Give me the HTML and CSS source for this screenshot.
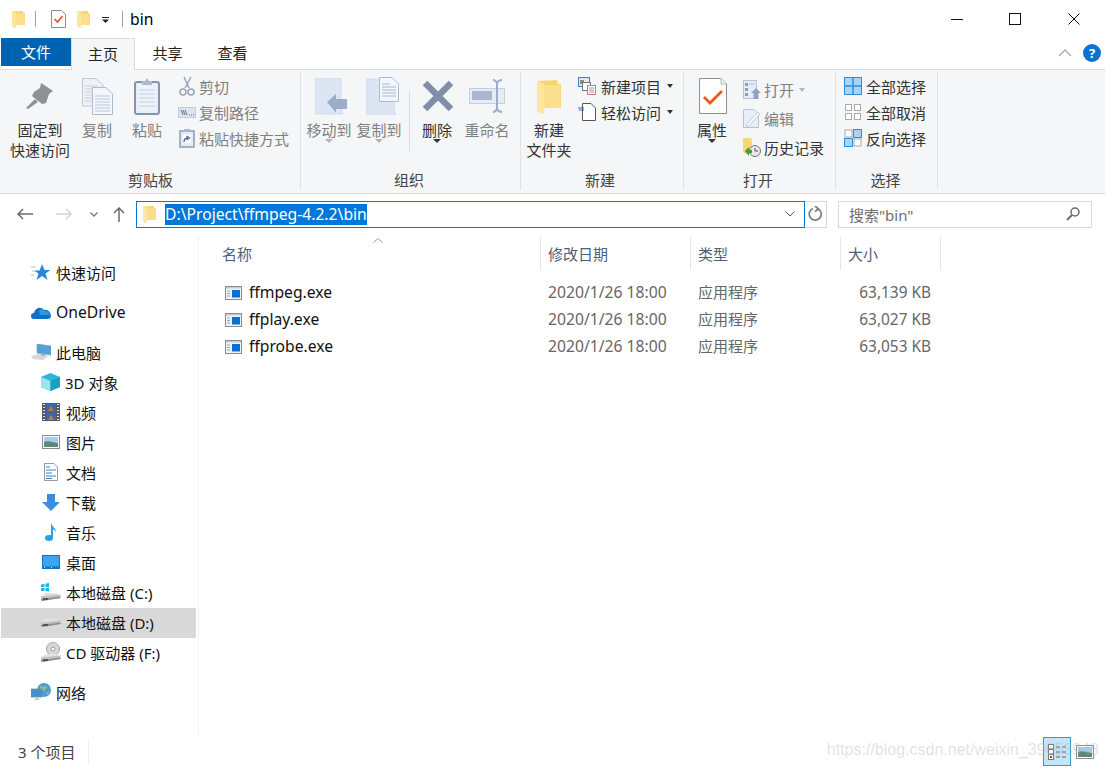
FILE: index.html
```html
<!DOCTYPE html>
<html lang="zh-CN">
<head>
  <meta charset="UTF-8">
  <title>bin</title>
  <link rel="stylesheet" href="styles.css">
</head>
<body>
  <svg class="sprite">
    <symbol id="folder" viewBox="0 0 13 18">
      <path d="M0 1.500L11 1V3H13V15H3V18L0 16Z" fill="#f7d56c"/>
      <path d="M3 3.500H12.800V15H3Z" fill="#fbdf8a"/>
      <path d="M0 1L4 3V18L0 16Z" fill="#fce6a0"/>
    </symbol>
    <symbol id="exe" viewBox="0 0 17 14">
      <rect x=".5" y=".5" width="16" height="13" fill="#eef3f9" stroke="#8a8a8a"/>
      <rect x="1" y="1" width="15" height="1.500" fill="#c3cedb"/>
      <path d="M2 5H5M2 7.500H5M2 10H5" stroke="#99a3ad"/>
      <rect x="7" y="4" width="8" height="7.500" fill="#0c6fd0"/>
    </symbol>
    <symbol id="drive" viewBox="0 0 20 10">
      <path d="M0 5.500L5 2H15L19.500 5L1 7.500Z" fill="#e2e2e2"/>
      <path d="M0 5.500L19.500 3.500V7L1 10L0 9Z" fill="#c2c2c2"/>
      <path d="M0 8L19.500 5.500V7L1 10L0 9Z" fill="#8f8f8f"/>
      <rect x="2" y="7.300" width="5" height="1.400" fill="#3a3a3a"/>
    </symbol>
  </svg>

  <div class="window">
    <div class="titlebar">
      <svg class="qa-folder" width="13" height="18"><use href="#folder"/></svg>
      <span class="qa-sep"></span>
      <svg class="qa-check" width="15" height="18" viewBox="0 0 15 18">
        <path d="M.5.5H10.500L14.500 4.500V17.500H.5Z" fill="#fff" stroke="#8c8c8c"/>
        <path d="M3.500 9L6.500 12L11.500 6" fill="none" stroke="#ec4e20" stroke-width="1.600"/>
      </svg>
      <svg class="qa-folder2" width="13" height="18"><use href="#folder"/></svg>
      <svg class="qa-drop" width="7" height="6" viewBox="0 0 7 6">
        <rect y="0" width="7" height="1" fill="#222"/>
        <path d="M0 2.500H7L3.500 6Z" fill="#222"/>
      </svg>
      <span class="qa-sep qa-sep-2"></span>
      <span class="title-text">bin</span>
      <div class="win-controls">
        <svg width="12" height="12" viewBox="0 0 12 12"><path d="M0 6.500H12" stroke="#111"/></svg>
        <svg width="12" height="12" viewBox="0 0 12 12"><rect x=".5" y=".5" width="11" height="11" fill="none" stroke="#111"/></svg>
        <svg class="win-close" width="12" height="12" viewBox="0 0 12 12"><path d="M.5.5L11.500 11.500M11.500.5L.5 11.500" stroke="#111"/></svg>
      </div>
    </div>

    <div class="tabs">
      <div class="tab tab-file">文件</div>
      <div class="tab tab-active">主页</div>
      <div class="tab">共享</div>
      <div class="tab">查看</div>
      <div class="tabs-right">
        <svg width="14" height="8" viewBox="0 0 14 8"><path d="M1 7L7 1L13 7" fill="none" stroke="#a8a8a8" stroke-width="1.300"/></svg>
        <span class="help">?</span>
      </div>
    </div>

    <div class="ribbon">
      <div class="group group-clip">
        <div class="group-body">
          <div class="big-btn btn-pin">
            <div class="big-icon">
              <svg width="28" height="28" viewBox="0 0 28 28"><path d="M15 1L27 9L23 12L20 21L16 22L6 14L8 10L14 6ZM9 17L12 20L2 27L0 26Z" fill="#8b9197"/></svg>
            </div>
            <div class="big-label">固定到<br>快速访问</div>
          </div>
          <div class="big-btn off">
            <div class="big-icon">
              <svg width="31" height="37" viewBox="0 0 31 37">
                <path d="M.5.5H14L21 7V28H.5Z" fill="#eef2f8" stroke="#bcc8da"/>
                <path d="M3 8H16M3 11H18M3 14H18M3 17H18M3 20H18M3 23H18" stroke="#c5d0e0"/>
                <path d="M10.500 9.500H24L30.500 16V36.500H10.500Z" fill="#f3f6fb" stroke="#aebcd2"/>
                <path d="M13 18H28M13 21H28M13 24H28M13 27H28M13 30H28M13 33H28" stroke="#b9c6da"/>
              </svg>
            </div>
            <div class="big-label">复制</div>
          </div>
          <div class="big-btn off">
            <div class="big-icon">
              <svg width="26" height="38" viewBox="0 0 26 38">
                <rect x="1" y="5" width="24" height="32" rx="2" fill="#e9eef6" stroke="#8494b0" stroke-width="2"/>
                <rect x="4" y="8" width="18" height="26" fill="#eef2f9"/>
                <path d="M5 13H21M5 17H21M5 21H21M5 25H21M5 29H21" stroke="#c5d0e2"/>
                <path d="M8 8V4H11L13 1L15 4H18V8Z" fill="#aeb9cc"/>
              </svg>
            </div>
            <div class="big-label">粘贴</div>
          </div>
          <div class="small-col">
            <div class="small-btn off">
              <svg width="18" height="20" viewBox="0 0 18 20" fill="none" stroke="#98a4ba" stroke-width="1.500">
                <path d="M6 1L11 12M13 1L7 12"/><circle cx="5" cy="16" r="3"/><circle cx="13" cy="16" r="3"/>
              </svg>
              <span>剪切</span>
            </div>
            <div class="small-btn off">
              <svg width="18" height="11" viewBox="0 0 18 11">
                <rect x=".5" y=".5" width="17" height="10" fill="#dde4ef" stroke="#c0cbdc"/>
                <path d="M3 3L5 8M5 3L7 8M7 3L9 8M11 8H12M13 8H14M15 8H16" stroke="#66738a"/>
              </svg>
              <span>复制路径</span>
            </div>
            <div class="small-btn off">
              <svg width="18" height="20" viewBox="0 0 18 20">
                <rect x="2" y="3" width="14" height="16" fill="#e5ebf4" stroke="#8e9db6" stroke-width="1.500"/>
                <rect x="6" y="1" width="6" height="3" fill="#aab6c9"/>
                <rect x="5" y="7" width="8" height="8" fill="#fff"/>
                <path d="M6 14C6 11 7 10 10 10M8.500 8L11.500 10L8.500 12" fill="none" stroke="#55698a" stroke-width="1.300"/>
              </svg>
              <span>粘贴快捷方式</span>
            </div>
          </div>
        </div>
        <div class="group-label">剪贴板</div>
      </div>

      <div class="group group-org">
        <div class="group-body">
          <div class="big-btn off">
            <div class="big-icon">
              <svg class="icon-move" width="32" height="37" viewBox="0 0 32 37">
                <path d="M0 0H26V31L28 36H0Z" fill="#dbe5f3" stroke="#d0dcee"/>
                <path d="M12 24L21 16V21H32V31H21V35Z" fill="#9badc9"/>
              </svg>
            </div>
            <div class="big-label">移动到</div>
            <span class="drop-arrow"></span>
          </div>
          <div class="big-btn off">
            <div class="big-icon">
              <svg class="icon-copyto" width="33" height="38" viewBox="0 0 33 38">
                <path d="M0 2H28V32L30 38H0Z" fill="#dbe5f3" stroke="#d0dcee"/>
                <path d="M13.500.5H26L32.500 7V24.500H13.500Z" fill="#f3f6fb" stroke="#aebcd2"/>
                <path d="M16 7H24M16 10H30M16 13H30M16 16H30M16 19H30" stroke="#a7b6cd"/>
              </svg>
            </div>
            <div class="big-label">复制到</div>
            <span class="drop-arrow"></span>
          </div>
          <span class="org-sep"></span>
          <div class="big-btn">
            <div class="big-icon">
              <svg class="icon-shift" width="32" height="32" viewBox="0 0 32 32"><path d="M3 3L29 29M29 3L3 29" stroke="#7f8fa9" stroke-width="6.500"/></svg>
            </div>
            <div class="big-label">删除</div>
            <span class="drop-arrow dark"></span>
          </div>
          <div class="big-btn off">
            <div class="big-icon">
              <svg width="37" height="34" viewBox="0 0 37 34">
                <rect x=".5" y="9.500" width="35" height="15" fill="#e6ecf6" stroke="#c3d0e3"/>
                <rect x="3" y="12" width="20" height="9" fill="#a9b8d0"/>
                <path d="M24 1C26 1 27 2 28 4C29 2 30 1 33 1M28 4V30M24 33C26 33 27 32 28 30C29 32 30 33 33 33" fill="none" stroke="#9eadc6" stroke-width="2"/>
              </svg>
            </div>
            <div class="big-label">重命名</div>
          </div>
        </div>
        <div class="group-label">组织</div>
      </div>

      <div class="group group-new">
        <div class="group-body">
          <div class="big-btn">
            <div class="big-icon">
              <svg width="24" height="36" viewBox="0 0 13 18" preserveAspectRatio="none"><use href="#folder"/></svg>
            </div>
            <div class="big-label">新建<br>文件夹</div>
          </div>
          <div class="small-col">
            <div class="small-btn">
              <svg width="18" height="18" viewBox="0 0 18 18">
                <rect x=".5" y=".5" width="11" height="9" fill="#dce8f5" stroke="#3a87c8"/>
                <rect x="2" y="3" width="4" height="4" fill="#7a9a6a"/>
                <rect x="4.500" y="5.500" width="8" height="8" fill="#fff" stroke="#777"/>
                <rect x="9.500" y="8.500" width="8" height="9" fill="#fff" stroke="#c77"/>
                <path d="M11 11H16M11 13H16M11 15H16" stroke="#99b"/>
              </svg>
              <span>新建项目</span>
              <span class="side-arrow"></span>
            </div>
            <div class="small-btn">
              <svg width="18" height="18" viewBox="0 0 18 18">
                <path d="M4.500.5H13L17.500 5V17.500H4.500Z" fill="#fff" stroke="#555"/>
                <path d="M0 5H6M1 7H6" stroke="#2a6fb8"/>
              </svg>
              <span>轻松访问</span>
              <span class="side-arrow"></span>
            </div>
          </div>
        </div>
        <div class="group-label">新建</div>
      </div>

      <div class="group group-open">
        <div class="group-body">
          <div class="big-btn">
            <div class="big-icon">
              <svg class="icon-shift" width="28" height="36" viewBox="0 0 28 36">
                <path d="M.5.500H22L27.500 6V35.500H.5Z" fill="#fff" stroke="#8f8f8f"/>
                <path d="M22 .5V6H27.500" fill="#eee" stroke="#bbb"/>
                <path d="M5 19L11 25L23 13" fill="none" stroke="#ea5a1e" stroke-width="2.800"/>
              </svg>
            </div>
            <div class="big-label">属性</div>
            <span class="drop-arrow dark"></span>
          </div>
          <div class="small-col col-open">
            <div class="small-btn off">
              <svg width="18" height="19" viewBox="0 0 18 19">
                <rect x=".5" y=".5" width="13" height="18" fill="#e6ecf5" stroke="#b4c2d6"/>
                <path d="M2 3H5V6H2ZM2 8H5V11H2ZM2 13H5V16H2Z" fill="#8e9db6"/>
                <path d="M6 4H12" stroke="#b4c2d6"/>
                <path d="M8 13L13 8L18 13H15.500V19H10.500V13Z" fill="#8fa2c0"/>
              </svg>
              <span>打开</span>
              <span class="side-arrow light"></span>
            </div>
            <div class="small-btn off">
              <svg width="18" height="19" viewBox="0 0 18 19">
                <path d="M.5.500H11L15.500 5V18.500H.5Z" fill="#e9eef6" stroke="#b4c2d6"/>
                <path d="M3 16L15 3L17 5L6 17L3 17Z" fill="#f7f9fc" stroke="#c0cde0"/>
              </svg>
              <span>编辑</span>
            </div>
            <div class="small-btn">
              <svg width="18" height="19" viewBox="0 0 18 19">
                <path d="M0 0H8L9 3V16H3L0 14Z" fill="#f5d776"/>
                <circle cx="12" cy="13" r="5.500" fill="#e8e8e8" stroke="#777"/>
                <path d="M12 10V13H15" fill="none" stroke="#555"/>
                <path d="M2 13L6 9V12H9V15H6V18Z" fill="#3f9b35"/>
              </svg>
              <span>历史记录</span>
            </div>
          </div>
        </div>
        <div class="group-label">打开</div>
      </div>

      <div class="group group-sel">
        <div class="group-body">
          <div class="small-col">
            <div class="small-btn">
              <svg width="18" height="18" viewBox="0 0 18 18">
                <rect x=".5" y=".5" width="17" height="17" fill="#a9d4f5" stroke="#2b8fdc"/>
                <path d="M9 0V18M0 9H18" stroke="#2b8fdc" stroke-width="1.500"/>
              </svg>
              <span>全部选择</span>
            </div>
            <div class="small-btn">
              <svg width="18" height="18" viewBox="0 0 18 18" fill="#fff" stroke="#a8a8a8">
                <rect x="1.500" y="1.500" width="6" height="6"/><rect x="10.500" y="1.500" width="6" height="6"/>
                <rect x="1.500" y="10.500" width="6" height="6"/><rect x="10.500" y="10.500" width="6" height="6"/>
              </svg>
              <span>全部取消</span>
            </div>
            <div class="small-btn">
              <svg width="18" height="18" viewBox="0 0 18 18">
                <rect x="1" y="1" width="7" height="7" fill="#fff" stroke="#a8a8a8"/>
                <rect x="9.500" y=".5" width="8" height="8" fill="#a9d4f5" stroke="#2b8fdc"/>
                <rect x=".5" y="9.500" width="8" height="8" fill="#a9d4f5" stroke="#2b8fdc"/>
                <rect x="10" y="10" width="7" height="7" fill="#fff" stroke="#a8a8a8"/>
              </svg>
              <span>反向选择</span>
            </div>
          </div>
        </div>
        <div class="group-label">选择</div>
      </div>
    </div>

    <div class="navbar">
      <svg class="nav-back" width="16" height="12" viewBox="0 0 16 12"><path d="M16 6H1M6 1L1 6L6 11" fill="none" stroke="#6b6b6b" stroke-width="1.500"/></svg>
      <svg class="nav-fwd" width="16" height="12" viewBox="0 0 16 12"><path d="M0 6H15M10 1L15 6L10 11" fill="none" stroke="#d4d4d4" stroke-width="1.500"/></svg>
      <svg class="nav-recent" width="8" height="5" viewBox="0 0 8 5"><path d="M.5.5L4 4L7.500.5" fill="none" stroke="#777" stroke-width="1.300"/></svg>
      <svg class="nav-up" width="12" height="15" viewBox="0 0 12 15"><path d="M6 15V1M1 6L6 1L11 6" fill="none" stroke="#6b6b6b" stroke-width="1.500"/></svg>
      <div class="address">
        <svg width="13" height="18"><use href="#folder"/></svg>
        <span class="path-text">D:\Project\ffmpeg-4.2.2\bin</span>
        <svg class="addr-drop" width="10" height="6" viewBox="0 0 10 6"><path d="M.5.5L5 5L9.500.5" fill="none" stroke="#555"/></svg>
      </div>
      <div class="refresh">
        <svg width="15" height="16" viewBox="0 0 15 16"><path d="M5 2.500A6 6 0 1 0 10.500 3M7 0L10.500 3L7 5.500" fill="none" stroke="#808080" stroke-width="1.800"/></svg>
      </div>
      <div class="search">
        <span>搜索"bin"</span>
        <svg width="14" height="14" viewBox="0 0 14 14"><circle cx="9" cy="5" r="4" fill="none" stroke="#6b6b6b" stroke-width="1.500"/><path d="M6 8L1 13" stroke="#6b6b6b" stroke-width="2"/></svg>
      </div>
    </div>

    <div class="main">
      <div class="sidebar">
        <div class="tree-item lvl1 first">
          <svg width="20" height="18" viewBox="0 0 20 18">
            <path d="M11 1L13.500 7H19.500L14.500 10.500L16.500 17L11 13L5.500 17L7.500 10.500L3 7.500H8.500Z" fill="#2b86d8"/>
            <path d="M0 4H5M1 8H4M0 12H3" stroke="#9cc7ea"/>
          </svg>
          <span>快速访问</span>
        </div>
        <div class="tree-item lvl1 gap">
          <svg width="20" height="13" viewBox="0 0 20 13">
            <path d="M3 13A3 3 0 0 1 3 7C4 2 10 0 13 4C17 3 20 7 20 10C20 12 18 13 17 13Z" fill="#0f6fc6"/>
            <path d="M8 5C10 2 13 3 14 5C17 4.500 19 7 19 9L9 9Z" fill="#2a9ae0"/>
          </svg>
          <span class="latin">OneDrive</span>
        </div>
        <div class="tree-item lvl1 gap">
          <svg width="20" height="16" viewBox="0 0 20 16">
            <path d="M6 0L20 2V11L6 9Z" fill="#4fa3d9" stroke="#7c93a8" stroke-width=".6"/>
            <path d="M0 12L7 10L18 12L12 16L2 15Z" fill="#d5d8db"/>
            <path d="M10 10L14 10.500L14 12L10 11.500Z" fill="#9aa5ae"/>
          </svg>
          <span>此电脑</span>
        </div>
        <div class="tree-item lvl2">
          <svg width="19" height="18" viewBox="0 0 19 18">
            <path d="M9.500 0L19 4V14L9.500 18L0 14V4Z" fill="#29b6d2"/>
            <path d="M0 4L9.500 8V18L0 14Z" fill="#9be3ee"/>
            <path d="M9.500 8L19 4V14L9.500 18Z" fill="#17a2c4"/>
          </svg>
          <span>3D 对象</span>
        </div>
        <div class="tree-item lvl2">
          <svg width="18" height="18" viewBox="0 0 18 18">
            <rect width="18" height="18" fill="#55595e"/>
            <path d="M1 1.500H3M1 4.500H3M1 7.500H3M1 10.500H3M1 13.500H3M1 16.500H3M15 1.500H17M15 4.500H17M15 7.500H17M15 10.500H17M15 13.500H17M15 16.500H17" stroke="#e4e4e4"/>
            <rect x="4" y="1" width="10" height="7.500" fill="#3a68b0"/>
            <rect x="4" y="9.500" width="10" height="7.500" fill="#3a68b0"/>
            <path d="M6 8L9 3L12 8ZM6 17L9 12L12 17Z" fill="#c8782c"/>
          </svg>
          <span>视频</span>
        </div>
        <div class="tree-item lvl2">
          <svg width="18" height="14" viewBox="0 0 18 14">
            <rect x=".5" y=".5" width="17" height="13" fill="#fff" stroke="#8c8c8c"/>
            <rect x="2" y="2" width="14" height="6" fill="#a8cdea"/>
            <path d="M2 7C6 5 10 7 16 8V12H2Z" fill="#5d8a76"/>
          </svg>
          <span>图片</span>
        </div>
        <div class="tree-item lvl2">
          <svg width="18" height="18" viewBox="0 0 18 18">
            <path d="M2.500.500H12L15.500 4V17.500H2.500Z" fill="#fff" stroke="#999"/>
            <path d="M4 4H8M4 7H14M4 10H10M4 13H14M4 15.500H10" stroke="#3b82c4"/>
          </svg>
          <span>文档</span>
        </div>
        <div class="tree-item lvl2">
          <svg width="18" height="17" viewBox="0 0 18 17"><path d="M5 0H13V8H18L9 17L0 8H5Z" fill="#3a8ee0"/></svg>
          <span>下载</span>
        </div>
        <div class="tree-item lvl2">
          <svg width="18" height="18" viewBox="0 0 18 18">
            <ellipse cx="7" cy="15" rx="4" ry="3" fill="#22a0e8"/>
            <path d="M9 15V0C10 4 14 5 14 9C13 7 11 6.500 11 6V15Z" fill="#22a0e8"/>
          </svg>
          <span>音乐</span>
        </div>
        <div class="tree-item lvl2">
          <svg width="18" height="14" viewBox="0 0 18 14">
            <rect width="18" height="14" fill="#1273c4"/>
            <rect x="1" y="1" width="16" height="10.500" fill="#3ba5ee"/>
            <path d="M2 12.500H16" stroke="#d6e9f8" stroke-dasharray="1 6"/>
          </svg>
          <span>桌面</span>
        </div>
        <div class="tree-item lvl2">
          <svg width="20" height="18" viewBox="0 0 20 18">
            <path d="M0 1.500L3.500 1V4H0ZM4.500.800L8 0V4H4.500ZM0 5H3.500V8H0ZM4.500 5H8V8.500L4.500 8Z" fill="#19b6ec"/>
            <use href="#drive" y="8" width="20" height="10"/>
          </svg>
          <span>本地磁盘 (C:)</span>
        </div>
        <div class="tree-item lvl2 selected">
          <svg width="20" height="10"><use href="#drive"/></svg>
          <span>本地磁盘 (D:)</span>
        </div>
        <div class="tree-item lvl2">
          <svg width="20" height="20" viewBox="0 0 20 20">
            <circle cx="12" cy="7" r="6.500" fill="#d8d8d8" stroke="#a5a5a5"/>
            <circle cx="12" cy="7" r="2" fill="#fff" stroke="#999"/>
            <use href="#drive" y="10" width="20" height="10"/>
          </svg>
          <span>CD 驱动器 (F:)</span>
        </div>
        <div class="tree-item lvl1 gap">
          <svg width="20" height="18" viewBox="0 0 20 18">
            <circle cx="13" cy="7" r="7" fill="#4f9cd0"/>
            <path d="M9 3C12 5 14 2 16 4C15 7 12 9 9 7ZM15 10L18 8L17 12Z" fill="#8fbf96"/>
            <rect x="0" y="6" width="11" height="8" fill="#3e93cd" stroke="#7b8b99" stroke-width=".8"/>
            <path d="M3 17H9L7 14.500H5Z" fill="#c8ccd0"/>
          </svg>
          <span>网络</span>
        </div>
      </div>

      <div class="content">
        <div class="col-head">
          <div class="head-cell head-name">名称
            <svg class="sort-mark" width="10" height="5" viewBox="0 0 10 5"><path d="M.5 4.500L5 .5L9.500 4.500" fill="none" stroke="#999"/></svg>
          </div>
          <div class="head-cell">修改日期</div>
          <div class="head-cell">类型</div>
          <div class="head-cell">大小</div>
        </div>
        <div class="file-row">
          <div class="file-name"><svg width="17" height="14"><use href="#exe"/></svg>ffmpeg.exe</div>
          <div class="file-meta latin">2020/1/26 18:00</div>
          <div class="file-meta">应用程序</div>
          <div class="file-meta file-size">63,139 KB</div>
        </div>
        <div class="file-row">
          <div class="file-name"><svg width="17" height="14"><use href="#exe"/></svg>ffplay.exe</div>
          <div class="file-meta latin">2020/1/26 18:00</div>
          <div class="file-meta">应用程序</div>
          <div class="file-meta file-size">63,027 KB</div>
        </div>
        <div class="file-row">
          <div class="file-name"><svg width="17" height="14"><use href="#exe"/></svg>ffprobe.exe</div>
          <div class="file-meta latin">2020/1/26 18:00</div>
          <div class="file-meta">应用程序</div>
          <div class="file-meta file-size">63,053 KB</div>
        </div>
      </div>
    </div>

    <div class="statusbar">
      <span class="item-count">3 个项目</span>
      <span class="status-sep"></span>
      <div class="view-btns">
        <div class="view-btn view-active">
          <svg width="19" height="16" viewBox="0 0 19 16">
            <rect x=".5" y=".5" width="5" height="4.500" fill="#fff" stroke="#777"/>
            <rect x=".5" y="5.500" width="5" height="4.500" fill="#fff" stroke="#777"/>
            <rect x=".5" y="10.500" width="5" height="5" fill="#fff" stroke="#777"/>
            <rect x="2" y="12" width="2" height="2" fill="#b5432a"/>
            <path d="M8 3H12M14 3H18M8 8H12M14 8H18M8 13H12M14 13H18" stroke="#666"/>
          </svg>
        </div>
        <svg width="18" height="14" viewBox="0 0 18 14">
          <rect x=".5" y=".5" width="17" height="13" fill="#fff" stroke="#8c8c8c"/>
          <rect x="2" y="2" width="14" height="6" fill="#a8cdea"/>
          <path d="M2 7C6 5 10 7 16 8V12H2Z" fill="#5d8a76"/>
        </svg>
      </div>
      <span class="watermark">https://blog.csdn.net/weixin_39653948</span>
    </div>
  </div>
</body>
</html>
```

FILE: styles.css
```css
* {
  box-sizing: border-box;
}
body {
  margin: 0;
  background: #fff;
  color: #1a1a1a;
  font-family: "Noto Sans", "Noto Sans CJK SC", sans-serif;
  font-size: 15px;
  overflow: hidden;
}
svg {
  display: block;
  flex: none;
}
.sprite {
  display: none;
}
.window {
  width: 1105px;
  height: 768px;
  display: flex;
  flex-direction: column;
  position: relative;
}
.latin {
  font-size: 15.700px;
}

/* title bar */
.titlebar {
  height: 38px;
  display: flex;
  align-items: center;
  padding-left: 12px;
}
.qa-sep {
  width: 1px;
  height: 16px;
  background: #a0a0a0;
  margin-left: 10px;
}
.qa-sep-2 {
  margin-left: 13px;
}
.qa-check {
  margin-left: 15px;
}
.qa-folder2 {
  margin-left: 11px;
}
.qa-drop {
  margin-left: 12px;
  margin-top: 2px;
}
.title-text {
  margin-left: 7px;
  font-size: 15.700px;
  color: #000;
}
.win-controls {
  margin-left: auto;
  width: 154px;
  padding-right: 25px;
  display: flex;
  gap: 46px;
}
.win-close {
  margin-left: 1px;
}

/* tabs */
.tabs {
  height: 32px;
  display: flex;
  padding-left: 1px;
  border-bottom: 1px solid #dadbdc;
  color: #222;
}
.tab {
  width: 65px;
  height: 30px;
  text-align: center;
  line-height: 30px;
}
.tab-file {
  width: 70px;
  height: 28px;
  line-height: 28px;
  background: #0063b1;
  color: #fff;
}
.tab-active {
  width: 64px;
  height: 32px;
  background: #f5f6f7;
  border: 1px solid #dadbdc;
  border-bottom: none;
}
.tabs-right {
  margin-left: auto;
  display: flex;
  align-items: center;
  gap: 11px;
  padding-right: 4px;
  padding-bottom: 2px;
}
.help {
  width: 18px;
  height: 18px;
  border-radius: 50%;
  background: #0a72cf;
  color: #fff;
  font-weight: 700;
  font-size: 13px;
  line-height: 18px;
  text-align: center;
}

/* ribbon */
.ribbon {
  height: 124px;
  background: #f5f6f7;
  border-bottom: 1px solid #dadbdc;
  display: flex;
  padding: 2px 0 3px;
}
.group {
  display: flex;
  flex-direction: column;
  border-right: 1px solid #e1e2e3;
}
.group-clip {
  width: 301px;
  padding-left: 8px;
}
.group-org {
  width: 220px;
  padding-left: 3px;
}
.group-new {
  width: 163px;
  padding-left: 3px;
}
.group-open {
  width: 152px;
  padding-left: 3px;
}
.group-sel {
  width: 102px;
  padding-left: 8px;
}
.group-body {
  flex: 1;
  display: flex;
}
.group-label {
  height: 20px;
  line-height: 20px;
  text-align: center;
  color: #444;
}
.group-clip .group-label,
.group-new .group-label {
  margin-left: -7px;
}
.group-org .group-label,
.group-open .group-label {
  margin-left: -6px;
}
.group-sel .group-label {
  margin-left: -10px;
}
.big-btn {
  width: 50px;
  flex: none;
  display: flex;
  flex-direction: column;
  align-items: center;
}
.btn-pin {
  width: 64px;
}
.big-icon {
  height: 48px;
  display: flex;
  align-items: center;
  justify-content: center;
}
.icon-move {
  margin-left: 4px;
}
.icon-copyto {
  margin-left: 6px;
}
.icon-shift {
  margin-left: 2px;
}
.big-label {
  line-height: 20px;
  text-align: center;
  white-space: nowrap;
  color: #333;
}
.off,
.off .big-label {
  color: #7f7f7f;
}
.drop-arrow {
  width: 0;
  height: 0;
  margin-top: -1px;
  border-left: 4px solid transparent;
  border-right: 4px solid transparent;
  border-top: 4px solid #b5b5b5;
}
.drop-arrow.dark {
  border-top-color: #333;
}
.org-sep {
  width: 1px;
  height: 60px;
  margin: 19px 2px 0 5px;
  background: #dcdde0;
}
.small-col {
  margin-left: 6px;
  padding-top: 1px;
}
.group-new .small-col {
  margin-left: 4px;
}
.group-sel .small-col {
  margin-left: 0;
}
.small-btn {
  height: 26px;
  display: flex;
  align-items: center;
  gap: 3px;
  white-space: nowrap;
  color: #333;
}
.small-btn.off {
  color: #7f7f7f;
}
.group-new .small-btn {
  gap: 5px;
}
.group-sel .small-btn {
  gap: 4px;
}
.col-open {
  padding-top: 3px;
}
.col-open .small-btn {
  height: 29px;
}
.side-arrow {
  width: 0;
  height: 0;
  margin-left: 1px;
  border-left: 3.500px solid transparent;
  border-right: 3.500px solid transparent;
  border-top: 4px solid #333;
}
.side-arrow.light {
  margin-left: 2px;
  border-top-color: #b5b5b5;
}

/* address row */
.navbar {
  height: 43px;
  display: flex;
  align-items: center;
  padding: 0 0 3px 17px;
}
.nav-fwd {
  margin-left: 23px;
}
.nav-recent {
  margin-left: 18px;
}
.nav-up {
  margin-left: 15px;
}
.address {
  width: 669px;
  height: 27px;
  margin-left: 11px;
  border: 1px solid #0078d7;
  display: flex;
  align-items: center;
  padding: 0 9px 0 6px;
}
.path-text {
  margin-left: 9px;
  background: #0078d7;
  color: #fff;
  font-size: 15.700px;
  line-height: 21px;
}
.addr-drop {
  margin-left: auto;
}
.refresh {
  width: 22px;
  height: 27px;
  border: 1px solid #d9d9d9;
  border-left: none;
  display: flex;
  align-items: center;
  justify-content: center;
}
.search {
  width: 254px;
  height: 27px;
  margin-left: 11px;
  border: 1px solid #d9d9d9;
  display: flex;
  align-items: center;
  justify-content: space-between;
  padding: 0 11px 0 10px;
  color: #6d6d6d;
}

/* main area */
.main {
  flex: 1;
  display: flex;
  min-height: 0;
}
.sidebar {
  width: 199px;
  border-right: 1px solid #f0f0f0;
  padding-left: 1px;
}
.tree-item {
  height: 30px;
  width: 195px;
  display: flex;
  align-items: center;
  padding-bottom: 2px;
  white-space: nowrap;
  color: #111;
}
.tree-item.first {
  margin-top: 21px;
}
.tree-item.gap {
  margin-top: 10px;
}
.lvl1 {
  padding-left: 30px;
}
.lvl1 span {
  margin-left: 5px;
}
.lvl2 {
  padding-left: 40px;
}
.lvl2 span {
  margin-left: 5px;
}
.lvl2 svg[width="18"] {
  margin-left: 1px;
  margin-right: 1px;
}
.selected {
  background: #d9d9d9;
}

/* file list */
.content {
  flex: 1;
}
.col-head,
.file-row {
  display: grid;
  grid-template-columns: 342px 150px 150px 100px;
}
.col-head {
  height: 33px;
  margin-bottom: 9px;
}
.head-cell {
  border-right: 1px solid #e5e5e5;
  padding-left: 7px;
  padding-top: 1px;
  line-height: 32px;
  color: #4c607a;
  position: relative;
}
.head-name {
  padding-left: 23px;
}
.sort-mark {
  position: absolute;
  left: 174px;
  top: 1px;
}
.file-row {
  height: 27px;
  line-height: 27px;
}
.file-name {
  display: flex;
  align-items: center;
  gap: 7px;
  padding-left: 26px;
  font-size: 15.700px;
  color: #111;
}
.file-meta {
  padding-left: 7px;
  color: #666;
}
.file-size {
  padding-left: 0;
  padding-right: 10px;
  font-size: 15.400px;
  text-align: right;
}

/* status bar */
.statusbar {
  height: 33px;
  display: flex;
  align-items: center;
  padding-left: 18px;
  position: relative;
  color: #444;
}
.status-sep {
  width: 1px;
  height: 25px;
  margin-left: 13px;
  background: #f0f0f0;
}
.view-btns {
  margin-left: auto;
  display: flex;
  align-items: center;
  gap: 5px;
  padding-right: 11px;
}
.view-btn {
  width: 28px;
  height: 29px;
  display: flex;
  align-items: center;
  justify-content: center;
}
.view-active {
  background: #c4e5f6;
  border: 1px solid #26a0da;
}
.watermark {
  position: absolute;
  right: 6px;
  top: 6px;
  font-family: "Liberation Sans", sans-serif;
  font-size: 16px;
  color: rgba(170, 170, 170, 0.35);
  white-space: nowrap;
}
```
